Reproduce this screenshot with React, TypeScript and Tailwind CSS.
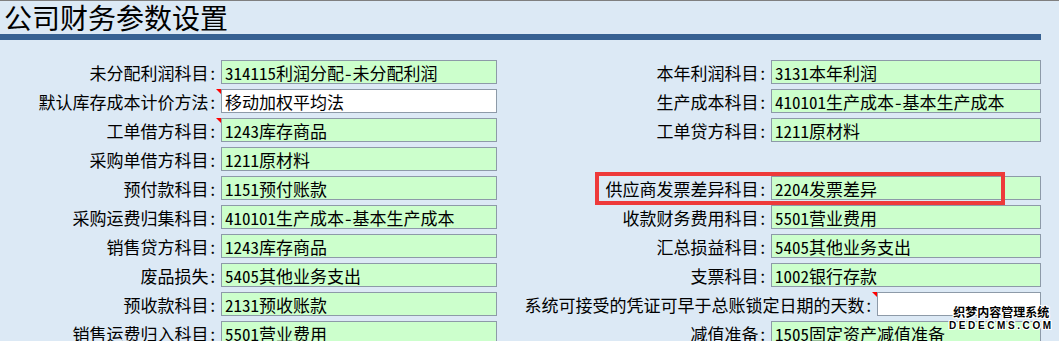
import React from 'react';

type Field = {
  label: string;
  value: string;
  white?: boolean;
  mark?: boolean;
  width?: string;
  boxed?: boolean;
};

// 左右两栏，每行一对（右栏第4行为空）
const rows: [Field, Field | null][] = [
  [
    { label: '未分配利润科目', value: '314115利润分配-未分配利润' },
    { label: '本年利润科目', value: '3131本年利润' },
  ],
  [
    { label: '默认库存成本计价方法', value: '移动加权平均法', white: true, mark: true },
    { label: '生产成本科目', value: '410101生产成本-基本生产成本' },
  ],
  [
    { label: '工单借方科目', value: '1243库存商品', mark: true },
    { label: '工单贷方科目', value: '1211原材料' },
  ],
  [{ label: '采购单借方科目', value: '1211原材料' }, null],
  [
    { label: '预付款科目', value: '1151预付账款' },
    { label: '供应商发票差异科目', value: '2204发票差异', boxed: true },
  ],
  [
    { label: '采购运费归集科目', value: '410101生产成本-基本生产成本' },
    { label: '收款财务费用科目', value: '5501营业费用' },
  ],
  [
    { label: '销售贷方科目', value: '1243库存商品' },
    { label: '汇总损益科目', value: '5405其他业务支出' },
  ],
  [
    { label: '废品损失', value: '5405其他业务支出' },
    { label: '支票科目', value: '1002银行存款' },
  ],
  [
    { label: '预收款科目', value: '2131预收账款' },
    {
      label: '系统可接受的凭证可早于总账锁定日期的天数',
      value: '',
      white: true,
      mark: true,
      width: 'w-[164px]',
    },
  ],
  [
    { label: '销售运费归入科目', value: '5501营业费用' },
    { label: '减值准备', value: '1505固定资产减值准备' },
  ],
];

function FieldCell({ field, inputWidth }: { field: Field; inputWidth: string }) {
  return (
    <>
      <div className="relative flex-1 whitespace-nowrap pr-[4px] pt-[1px] text-right text-[17px] leading-[24px] text-black">
        {field.label}:
        {field.mark && (
          <span className="absolute right-0 top-0 h-0 w-0 border-l-[5px] border-t-[5px] border-l-transparent border-t-[#ff0000]" />
        )}
      </div>
      <div
        className={`${field.width ?? inputWidth} h-[24px] overflow-hidden whitespace-nowrap border border-[#8d9aa8] pl-[3px] pt-[1px] text-[17px] leading-[21px] text-black ${
          field.white ? 'bg-white' : 'bg-[#ccffcc]'
        }`}
      >
        {field.value}
      </div>
    </>
  );
}

export default function App() {
  return (
    <div className="relative h-[341px] w-[1059px] overflow-hidden border-t border-[#7f7f7f] bg-[#dce9f5] font-['Noto_Sans_Mono_CJK_SC','Noto_Sans_CJK_SC',sans-serif]">
      <h1 className="h-[33px] pl-[4px] text-[28px] leading-[33px] text-black">公司财务参数设置</h1>
      <div className="h-[6px] w-[1041px] bg-[#376192]" />

      <div className="mt-[20px] flex flex-col gap-[5px]">
        {rows.map(([left, right], i) => (
          <div key={i} className="flex h-[24px]">
            <div className="flex w-[497px]">
              <FieldCell field={left} inputWidth="w-[276px]" />
            </div>
            <div className="relative flex w-[544px]">
              {right && <FieldCell field={right} inputWidth="w-[270px]" />}
              {right?.boxed && (
                <div className="absolute left-[98px] top-[-4px] h-[33px] w-[410px] border-4 border-[#ee3a3a]" />
              )}
            </div>
          </div>
        ))}
      </div>

      {/* 水印 */}
      <div className="absolute left-[949px] top-[305px] flex flex-col items-center font-bold leading-none text-black [text-shadow:1px_0_0_#fff,-1px_0_0_#fff,0_1px_0_#fff,0_-1px_0_#fff,1px_1px_0_#fff,-1px_-1px_0_#fff,1px_-1px_0_#fff,-1px_1px_0_#fff]">
        <span className="text-[12px]">织梦内容管理系统</span>
        <span className="mt-[3px] font-['Liberation_Sans',sans-serif] text-[10px] tracking-[2.6px]">DEDECMS.COM</span>
      </div>
    </div>
  );
}
